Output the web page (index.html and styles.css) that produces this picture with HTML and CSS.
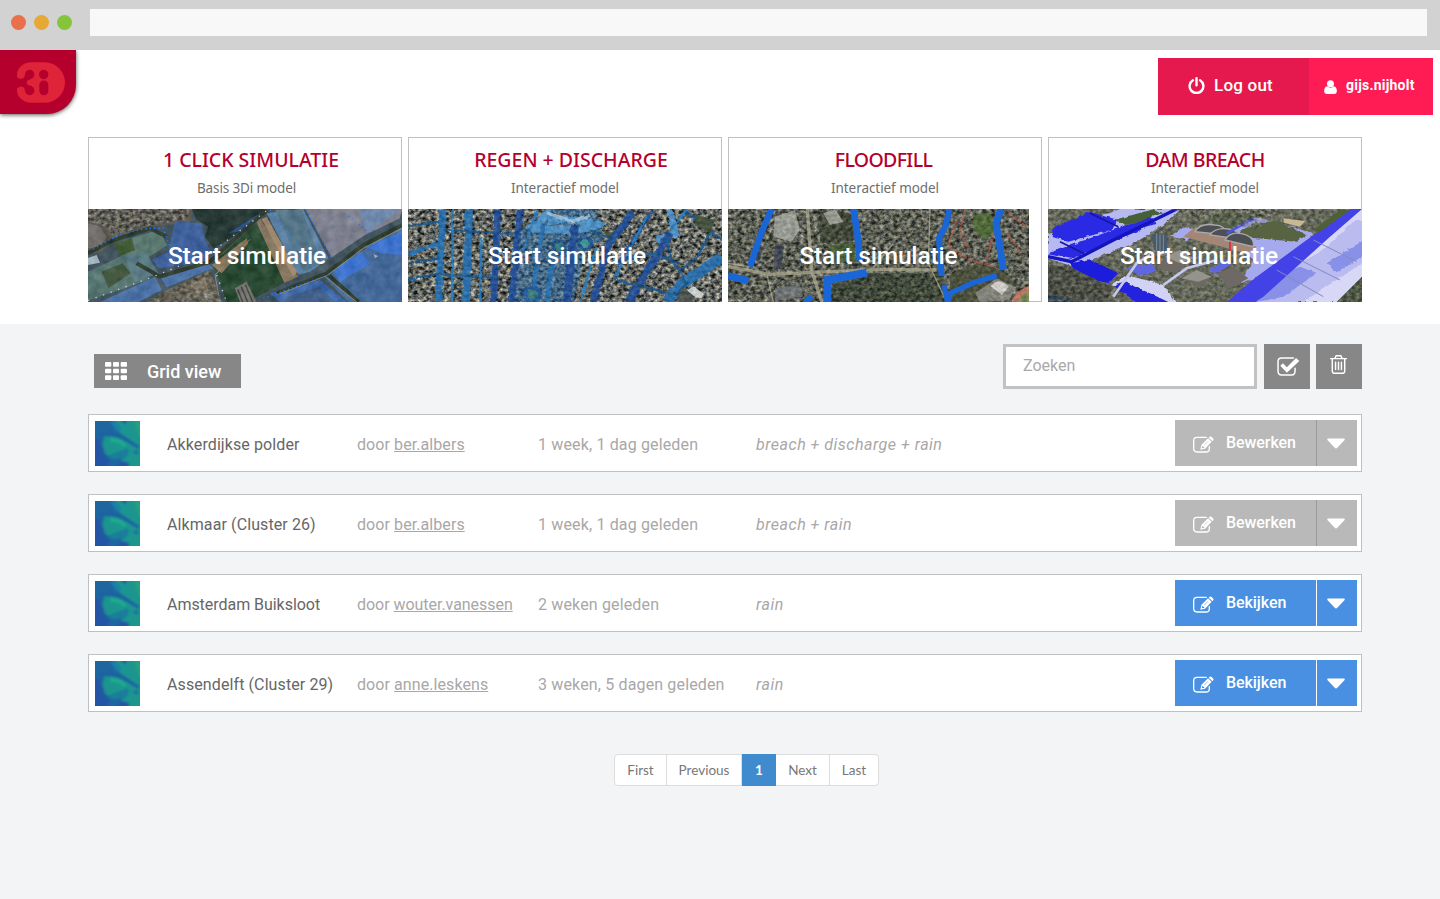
FILE: index.html
```html
<!DOCTYPE html>
<html lang="nl">
<head>
<meta charset="utf-8">
<title>3Di</title>
<link rel="stylesheet" href="styles.css">
</head>
<body>
<svg class="defs" aria-hidden="true">
  <defs>
    <filter id="ground" x="0" y="0" width="100%" height="100%" color-interpolation-filters="sRGB">
      <feTurbulence type="fractalNoise" baseFrequency="0.035" numOctaves="4" seed="4" result="n"/>
      <feColorMatrix in="n" values="1 .6 0 0 -.45  1 .6 0 0 -.42  1 .6 0 0 -.44  0 0 0 0 .75" result="c"/>
      <feComposite in="c" in2="SourceGraphic" operator="in"/>
    </filter>
    <filter id="houses" x="0" y="0" width="100%" height="100%" color-interpolation-filters="sRGB">
      <feTurbulence type="fractalNoise" baseFrequency="0.075 0.095" numOctaves="3" seed="9" result="n"/>
      <feColorMatrix in="n" values="1.5 .3 0 0 -.5  1.4 .3 .1 0 -.5  1.3 .2 .3 0 -.53  0 0 0 0 .8" result="c"/>
      <feComposite in="c" in2="SourceGraphic" operator="in"/>
    </filter>
    <filter id="rough" x="-5%" y="-5%" width="110%" height="110%">
      <feTurbulence type="fractalNoise" baseFrequency="0.06" numOctaves="2" seed="3" result="n"/>
      <feDisplacementMap in="SourceGraphic" in2="n" scale="12" xChannelSelector="R" yChannelSelector="G"/>
    </filter>
    <filter id="soft"><feGaussianBlur stdDeviation="2.6"/></filter>
    <symbol id="thumb" viewBox="0 0 135 135">
      <rect width="135" height="135" fill="#1f66a0"/>
      <g filter="url(#soft)">
        <path d="M60-5H140V140H86L78 122L84 108L50 112L32 100L22 70L30 40L46 38L82 46L66 20Z" fill="#1a958f"/>
        <path d="M46 50Q70 48 96 70L88 78Q64 60 46 64Z" fill="#1fab8f"/>
        <path d="M56-5L78 20L72 34L62 28L48 6Z" fill="#1d7fa5"/>
        <path d="M76-5H98L90 10Z" fill="#2457a4"/>
        <path d="M0 34L34 34Q70 28 96 50L134 76L130 84L96 64Q62 42 22 46Z" fill="#1d62a0"/>
        <path d="M70 92L98 82L102 94L90 112L50 116L40 104Z" fill="#1a7b9c"/>
        <path d="M118 0H140V60L128 34Z" fill="#25a078"/>
        <path d="M-5 50L16 58L24 94L46 120L34 140H-5Z" fill="#2357a4"/>
        <path d="M76 118L104 126L98 140H70ZM112 92L130 90L126 100Z" fill="#2755a4"/>
      </g>
    </symbol>
    <symbol id="edit" viewBox="0 0 63 51">
      <path d="M40 4H12Q2 4 2 14V37Q2 48 12 48H39Q49 48 49 38V32" fill="none" stroke="#fff" stroke-width="4" stroke-linecap="round"/>
      <path d="M22 41L25 27L45 7L56 17L36 38Z" fill="#fff"/>
      <path d="M47 5L50 2Q53 0 56 3L61 8Q63 11 60 14L58 15Z" fill="#fff"/>
      <path d="M28 29L35 35L29 37L26 34Z" fill="currentColor"/><path d="M34 27L45 16" stroke="currentColor" stroke-width="1.8"/>
    </symbol>
    <symbol id="caret" viewBox="0 0 54 32"><path d="M3 1H51Q55 2 52 6L31 29Q27 33 23 29L2 6Q-1 2 3 1Z" fill="#fff"/></symbol>
  </defs>
</svg>

<div class="chrome">
  <div class="lights"><i class="red"></i><i class="amber"></i><i class="green"></i></div>
  <div class="address"></div>
</div>

<header class="top">
  <div class="logo">
    <svg viewBox="51 186 144 122" width="48" height="41">
      <path d="M93 186H134A61 61 0 0 1 134 308H93C70 308 51 290 51 272V224C51 203 70 186 93 186Z" fill="#df2339"/>
      <g fill="#b5002d">
        <circle cx="89" cy="223" r="14"/><circle cx="89" cy="271" r="14"/>
        <path d="M48 226Q54 237 64 236Q74 235 75 222L92 237Q80 239 80 247Q80 255 92 257L75 272Q74 260 64 259Q54 259 48 270Z"/>
        <circle cx="131" cy="223" r="14"/><rect x="118" y="241" width="27" height="44" rx="13"/>
      </g>
    </svg>
  </div>
  <nav class="account">
    <a class="logout">
      <svg viewBox="0 0 50 52" width="17" height="17" fill="none" stroke="#fff" stroke-width="7.5" stroke-linecap="round"><path d="M14 10A21 21 0 1 0 36 10M25 4V25"/></svg>
      <span>Log out</span>
    </a>
    <a class="user">
      <svg viewBox="0 0 38 42" width="13" height="14" fill="#fff"><circle cx="19" cy="11" r="10.5"/><path d="M9 19Q19 27 29 19Q38 21 38 33Q38 42 30 42H8Q0 42 0 33Q0 21 9 19Z"/></svg>
      <span>gijs.nijholt</span>
    </a>
  </nav>
</header>

<section class="cards">
  <article class="card">
    <h2 class="t1">1 CLICK SIMULATIE</h2>
    <p class="basis">Basis 3Di model</p>
    <div class="shot">
      <svg viewBox="24 237 942 279" preserveAspectRatio="none">
        <rect x="24" y="237" width="942" height="279" fill="#3f5360"/>
        <path d="M24 237H340L330 275L180 295L110 325L60 370L24 370Z" fill="#5d5852"/>
        <path d="M24 280L60 290L80 320L60 350L24 355Z" fill="#77726f"/>
        <path d="M335 237H560L455 325L400 355L375 320L385 290L350 270Z" fill="#20332f"/>
        <path d="M445 310L555 240L500 300Z" fill="#27548f"/>
        <path d="M285 275L365 280L375 330L390 360L375 395L300 405L240 415L215 390L265 365L275 320Z" fill="#3d63a8"/>
        <path d="M100 340L235 300L262 345L200 385L130 395Z" fill="#5b7d74"/>
        <path d="M100 340L155 325L165 360L120 378Z" fill="#3f5b32"/>
        <path d="M24 425L125 378L195 415L205 450L24 512Z" fill="#587a75"/>
        <path d="M65 425L128 400L152 430L85 475Z" fill="#41573c"/>
        <path d="M130 375L200 370L235 430L165 455Z" fill="#5a7f8b"/>
        <path d="M60 516L225 440L245 480L175 516ZM240 440L385 400L400 415L260 472Z" fill="#4b75b2"/>
        <path d="M250 485L390 420L425 516H200Z" fill="#6a6253"/>
        <path d="M395 395L520 290L540 265L655 440L610 460L490 335L415 425Z" fill="#8f7b62"/>
        <path d="M395 400L530 278L613 458L500 516H440L410 435Z" fill="#24472e"/>
        <path d="M395 405L500 325L505 340L425 430Z" fill="#927b5f"/>
        <path d="M545 268L560 260L652 425L640 440Z" fill="#ac9173"/>
        <path d="M560 250L670 237L745 385L690 425L655 435Z" fill="#5e87b0"/>
        <path d="M585 240L665 240L725 400L670 425Z" fill="#54798f"/>
        <path d="M675 237H966L960 265L855 315L755 382Z" fill="#858698"/>
        <path d="M835 237H965L860 308Z" fill="#7391bb"/>
        <path d="M735 430L966 290V516H805L745 455Z" fill="#416aa3"/>
        <path d="M760 415L845 365L870 400L780 455ZM855 350L966 305V375L905 370Z" fill="#3c78e2"/>
        <path d="M570 490L720 450L800 516H600Z" fill="#3c6bb7"/>
        <path d="M620 500L720 470L765 516H610Z" fill="#3d5f90"/>
        <g fill="none" stroke="#29382a" stroke-width="12"><path d="M24 370L100 330L210 295L260 320"/><path d="M170 400L240 440L390 395L560 240"/><path d="M590 490L740 430L850 345L966 285"/><path d="M740 430L835 516"/></g>
        <g fill="none" stroke="#948e78" stroke-width="3"><path d="M590 495L740 437L850 355L966 295M735 440L830 516M420 516L405 435L510 328"/></g>
        <g fill="none" stroke="#267cff" stroke-width="4" stroke-dasharray="4 9"><path d="M40 358Q140 290 250 295L280 380L385 395M570 240L710 425M680 240L755 385M550 505L760 430L966 310M795 250L870 310M725 480L780 516"/></g>
        <g fill="none" stroke="#d4e1ec" stroke-width="4" stroke-dasharray="4 20"><path d="M24 512L230 436L390 370L565 238M410 435L440 516"/></g>
        <path d="M465 475L500 455L530 516H480Z" fill="#77746f"/><path d="M473 478L488 516M484 470L503 516M496 464L518 516" stroke="#373c37" stroke-width="4"/>
        <path d="M333 463L375 440L390 505L350 490Z" fill="#92816c"/>
        <path d="M24 384L50 375L60 398L24 405ZM370 490L390 493L378 504ZM880 372L895 378L885 385Z" fill="#adc0ce"/>
        <rect x="24" y="237" width="942" height="279" filter="url(#ground)" opacity=".2"/>
        <path d="M70 237H330L320 270L180 290L100 320L80 290L24 275V237Z" filter="url(#houses)" opacity=".6"/>
        <path d="M250 485L390 420L425 516H200Z" filter="url(#houses)" opacity=".4"/>
      </svg>
      <span>Start simulatie</span>
    </div>
  </article>

  <article class="card">
    <h2 class="t2">REGEN + DISCHARGE</h2>
    <p>Interactief model</p>
    <div class="shot">
      <svg viewBox="24 237 942 279" preserveAspectRatio="none">
        <rect x="24" y="237" width="942" height="279" fill="#5d6870"/>
        <rect x="24" y="237" width="942" height="279" filter="url(#houses)"/>
        <path d="M360 300L440 237H590L610 330L560 350L520 516H330Z" fill="#1f6db5" opacity=".5"/>
        <g filter="url(#rough)" fill="none">
          <path d="M385 295Q440 275 445 237M445 275Q520 260 590 285Q540 310 395 295M810 240L825 310L770 330" stroke="#4b98d6" stroke-width="22"/>
          <path d="M440 250L520 275L570 255" stroke="#a4c9e2" stroke-width="12"/>
          <g stroke="#2371b8"><path d="M128 237L116 516" stroke-width="20"/><path d="M207 237L198 516" stroke-width="24"/><path d="M24 372L120 340" stroke-width="13"/><path d="M966 380L850 460L800 516" stroke-width="32"/><path d="M430 280L395 516M470 320L440 516" stroke-width="14"/></g>
          <g stroke="#1b4e9e"><path d="M293 237L282 516" stroke-width="20"/><path d="M360 237L335 516" stroke-width="20"/><path d="M525 285L500 516" stroke-width="24"/><path d="M700 245L625 345L580 516" stroke-width="21"/><path d="M810 310L685 516" stroke-width="23"/><path d="M760 240L655 400" stroke-width="12"/></g>
          <g stroke="#17558f" stroke-width="7"><path d="M24 290L120 275M130 300L360 312M120 435L290 440M570 300L640 330M650 450L830 495L860 460L815 390L800 320M850 237L966 330M930 310L890 385L840 420M620 400L760 370L840 400M24 450L120 430M24 400L115 385M500 250L520 237L540 250"/></g>
          <g stroke="#237fcb" stroke-width="7"><path d="M245 320L240 516M410 237L370 360M158 237L156 516M590 350L540 516M740 260L640 450M860 240L810 300"/></g>
          <circle cx="555" cy="340" r="17" stroke="#14549c" stroke-width="10" fill="#3b9b9d"/><circle cx="478" cy="352" r="20" stroke="#124b86" stroke-width="9" fill="#307c86"/><circle cx="397" cy="493" r="22" stroke="#1a5ca8" stroke-width="12" fill="#347d83"/>
        </g>
        <path d="M830 506L850 470L875 490L880 516H835Z" fill="#4a514d"/><path d="M862 482L880 468L912 492L905 505L885 500Z" fill="#d8dde0"/>
        <path d="M890 255L945 270L930 310L885 285ZM610 300L640 310L625 325Z" fill="#41513b"/>
        <rect x="24" y="237" width="942" height="279" filter="url(#houses)" opacity=".2"/>
      </svg>
      <span>Start simulatie</span>
    </div>
  </article>

  <article class="card">
    <h2 class="t3">FLOODFILL</h2>
    <p>Interactief model</p>
    <div class="shot narrow">
      <svg viewBox="24 237 903 279" preserveAspectRatio="none">
        <rect x="24" y="237" width="903" height="279" fill="#4e5547"/>
        <rect x="24" y="237" width="903" height="279" filter="url(#houses)" opacity=".65"/>
        <path d="M440 430L670 430L680 516H330L335 460Z" fill="#25321f" opacity=".6"/>
        <path d="M300 240L390 250L420 330L300 340Z" fill="#343d2c" opacity=".8"/>
        <path d="M330 345L400 340L410 395L320 400Z" fill="#435b2e"/>
        <path d="M760 255L810 245L830 300L795 330L760 300Z" fill="#4d6b32"/>
        <path d="M165 260L225 240L240 300L215 335L160 320ZM310 250L345 237L370 275L330 285Z" fill="#a4a9a0"/>
        <path d="M165 340L192 350L185 415L160 420ZM110 345L130 355L115 395L95 385Z" fill="#3b4350"/>
        <path d="M165 475L240 465L250 500L165 510Z" fill="#70777a"/>
        <g fill="none" stroke="#a5a38a"><path d="M262 237L275 420L305 516M24 410L150 433L480 418L650 420" stroke-width="10"/><path d="M140 430L160 516M24 400L90 410M630 237L625 400L680 516M520 340L450 425" stroke-width="4"/></g>
        <g fill="none" stroke="#a35b4b" stroke-width="7" stroke-dasharray="13 4"><path d="M710 270L685 350L750 390L820 410M735 240L720 300L745 360M820 310L800 390M865 250L920 290M860 310L905 370"/></g>
        <path d="M690 437Q760 380 850 425L885 465L840 516H690Z" fill="#474d37"/>
        <path d="M765 490L830 445L885 470L870 510L780 516Z" fill="#8b8b84"/><path d="M812 468Q838 440 866 470L846 495Z" fill="#e7e5df"/>
        <path d="M875 516Q880 485 927 467V516Z" fill="#c67a62"/><path d="M897 516Q905 492 927 487V516Z" fill="#778e50"/>
        <rect x="24" y="237" width="903" height="279" filter="url(#houses)" opacity=".25"/>
        <g fill="none" stroke="#1a66d6"><path d="M155 237L125 305L90 410" stroke-width="19"/><path d="M24 437L85 453" stroke-width="21"/><path d="M400 237L412 310L420 395" stroke-width="20"/><path d="M322 516V450L440 428" stroke-width="24"/><path d="M688 237L678 285L657 325L665 438" stroke-width="18"/><path d="M843 237L828 280L838 340L850 420" stroke-width="21"/><path d="M672 465L683 516L690 490L760 458L830 437" stroke-width="16"/><path d="M255 516L275 500" stroke-width="18"/></g>
      </svg>
      <span>Start simulatie</span>
    </div>
  </article>

  <article class="card">
    <h2 class="t4">DAM BREACH</h2>
    <p>Interactief model</p>
    <div class="shot left">
      <svg viewBox="24 237 942 279" preserveAspectRatio="none">
        <rect x="24" y="237" width="942" height="279" fill="#656a59"/>
        <rect x="24" y="237" width="942" height="279" filter="url(#houses)" opacity=".4"/>
        <g filter="url(#rough)">
          <path d="M90 290L240 237H420L370 285L270 345L100 410L24 385V310Z" fill="#b7baf0"/>
          <path d="M40 295L150 245L235 270L215 300L85 335L35 320ZM24 370L120 335L330 260L350 280L100 385Z" fill="#2b2be4"/>
          <path d="M225 270L340 237L370 250L260 285Z" fill="#476038"/>
          <path d="M90 400L150 388L235 430L205 460L110 435Z" fill="#1c1ddd"/>
          <path d="M215 465L260 435L370 465L410 516H300Z" fill="#d2d2f4"/>
          <path d="M222 470L250 455L330 490L385 516H290Z" fill="#2021df"/>
          <path d="M250 415L335 400L350 425L300 435ZM505 420L560 390L580 400L530 430Z" fill="#5e66e0"/>
          <path d="M390 320L430 290L470 300L440 330ZM560 300L640 260L700 275L820 310L800 340L760 380L640 450L600 460L640 390L620 370Z" fill="#a5a9ed"/>
          <path d="M600 305L640 280L710 272L800 315L770 335L600 320Z" fill="#586442"/>
          <path d="M500 270L560 240L650 260L570 302Z" fill="#536146"/>
          <path d="M930 250L980 230V450L900 516H650L700 425Z" fill="#d8d8f6"/>
          <path d="M710 440L850 360L945 270L980 270V390L790 516H660Z" fill="#babcf0"/>
          <path d="M700 440L780 410L830 430L730 500L650 516ZM860 400L980 325V370L890 430Z" fill="#8990e8"/>
        </g>
        <path d="M560 516L650 440L800 330L935 237H966L865 325L670 500L645 516Z" fill="#4342e6"/>
        <path d="M24 380L95 395L220 330L410 237" fill="none" stroke="#1515ba" stroke-width="10"/>
        <path d="M150 250L235 290M60 335L130 370" stroke="#1616a2" stroke-width="5"/>
        <path d="M820 300L900 240H930L840 305Z" fill="#4e6037"/>
        <path d="M24 405L90 410L220 475L195 516H24Z" fill="#43483e"/>
        <path d="M24 495L70 500L100 516H24Z" fill="#1e3549"/>
        <path d="M890 516L966 440V516Z" fill="#455239"/>
        <path d="M430 320L465 292L650 350L620 370Z" fill="#a38676"/>
        <g fill="#4c5055" stroke="#aaaaab" stroke-width="4"><path d="M465 305Q480 278 525 285Q555 285 560 315Z"/><path d="M510 315Q525 292 565 297Q600 300 605 328Z"/><path d="M555 330Q570 303 605 311Q645 320 640 350Z"/></g>
        <path d="M335 315L350 307L382 318L380 365L342 360Z" fill="#495b6b"/><path d="M350 310V362M360 313V363M370 315V363" stroke="#9aa7af" stroke-width="2"/>
        <path d="M375 380L420 360L460 385L410 430L350 415ZM425 445L470 420L515 440L480 473ZM530 430L580 410L625 445L570 475Z" fill="#6e6964"/><path d="M375 380L420 360L460 385L420 400ZM425 445L470 420L515 440L475 455Z" fill="#94938c"/>
        <path d="M570 335V365" stroke="#d33746" stroke-width="6"/>
        <path d="M640 265L560 310" stroke="#4e55df" stroke-width="8"/>
        <path d="M710 420L850 500M760 380L900 450M820 330L950 395" stroke="#8389c5" stroke-width="3"/>
        <path d="M730 265L795 273L780 290L732 278Z" fill="#c8b894"/>
        <path d="M370 465L440 415L530 390M220 500L290 400L330 375" fill="none" stroke="#c5c8ed" stroke-width="8"/>
        <path d="M24 405L90 410L220 475L195 516H24ZM390 237H720L650 300L500 270ZM890 516L966 440V516Z" filter="url(#houses)" opacity=".4"/>
      </svg>
      <span>Start simulatie</span>
    </div>
  </article>
</section>

<main class="models">
  <div class="toolbar">
    <a class="gridview">
      <svg viewBox="0 0 66 54" width="22" height="18" fill="#fff"><rect width="19" height="14" rx="3"/><rect x="24" width="18" height="14" rx="3"/><rect x="47" width="19" height="14" rx="3"/><rect y="20" width="19" height="14" rx="3"/><rect x="24" y="20" width="18" height="14" rx="3"/><rect x="47" y="20" width="19" height="14" rx="3"/><rect y="40" width="19" height="14" rx="3"/><rect x="24" y="40" width="18" height="14" rx="3"/><rect x="47" y="40" width="19" height="14" rx="3"/></svg>
      <span>Grid view</span>
    </a>
    <div class="search"><span>Zoeken</span></div>
    <a class="tool"><svg viewBox="0 0 68 58" width="23" height="19"><path d="M49 3H13Q2 3 2 14V43Q2 55 13 55H43Q54 55 54 43V34" fill="none" stroke="#fff" stroke-width="4.5" stroke-linecap="round"/><path d="M9 27L17 19L29 31L57 3L67 12L29 48Z" fill="#fff"/></svg></a>
    <a class="tool trash"><svg viewBox="0 0 52 58" width="17" height="19" fill="none" stroke="#fff" stroke-width="4.5" stroke-linecap="round"><path d="M2 11H50M15 10L19 2H33L37 10M7 12V50Q7 56 13 56H39Q45 56 45 50V12M17 22V44M26 22V44M35 22V44"/></svg></a>
  </div>

  <div class="list">
    <div class="row">
      <svg class="thumb"><use href="#thumb"/></svg>
      <span class="name">Akkerdijkse polder</span>
      <span class="owner">door <u>ber.albers</u></span>
      <span class="age">1 week, 1 dag geleden</span>
      <em>breach + discharge + rain</em>
      <div class="action"><a><svg class="edit"><use href="#edit"/></svg><span>Bewerken</span></a><a class="more"><svg><use href="#caret"/></svg></a></div>
    </div>
    <div class="row">
      <svg class="thumb"><use href="#thumb"/></svg>
      <span class="name">Alkmaar (Cluster 26)</span>
      <span class="owner">door <u>ber.albers</u></span>
      <span class="age">1 week, 1 dag geleden</span>
      <em>breach + rain</em>
      <div class="action"><a><svg class="edit"><use href="#edit"/></svg><span>Bewerken</span></a><a class="more"><svg><use href="#caret"/></svg></a></div>
    </div>
    <div class="row">
      <svg class="thumb"><use href="#thumb"/></svg>
      <span class="name tight">Amsterdam Buiksloot</span>
      <span class="owner tight">door <u>wouter.vanessen</u></span>
      <span class="age">2 weken geleden</span>
      <em>rain</em>
      <div class="action view"><a><svg class="edit"><use href="#edit"/></svg><span>Bekijken</span></a><a class="more"><svg><use href="#caret"/></svg></a></div>
    </div>
    <div class="row">
      <svg class="thumb"><use href="#thumb"/></svg>
      <span class="name">Assendelft (Cluster 29)</span>
      <span class="owner">door <u>anne.leskens</u></span>
      <span class="age">3 weken, 5 dagen geleden</span>
      <em>rain</em>
      <div class="action view"><a><svg class="edit"><use href="#edit"/></svg><span>Bekijken</span></a><a class="more"><svg><use href="#caret"/></svg></a></div>
    </div>
  </div>

  <div class="pages">
    <a class="p-first">First</a><a class="p-prev">Previous</a><a class="p-now">1</a><a class="p-next">Next</a><a class="p-last">Last</a>
  </div>
</main>
</body>
</html>
```

FILE: styles.css
```css
* { box-sizing: border-box; }
body { margin: 0; width: 1440px; height: 899px; overflow: hidden; background: #fff; font-family: Roboto, "Liberation Sans", sans-serif; display: flex; flex-direction: column; }
.defs { position: absolute; width: 0; height: 0; }
.chrome { flex: none; height: 50px; background: #d2d2d2; display: flex; padding: 9px 13px 0 11px; gap: 18px; }
.lights { display: flex; gap: 8px; padding-top: 6px; }
.lights i { width: 15px; height: 15px; border-radius: 50%; }
.red { background: #ea6f4b; }
.amber { background: #e6a935; }
.green { background: #86c53b; }
.address { flex: 1; height: 27px; background: #f8f8f8; }
.top { flex: none; height: 87px; display: flex; justify-content: space-between; padding-right: 7px; }
.logo { width: 76px; height: 64px; background: #b5002d; border-radius: 0 0 29px 0; box-shadow: 0 1px 4px rgba(0,0,0,.65); padding: 12px 0 0 17px; clip-path: inset(0 -8px -8px 0); }
.logo svg { display: block; }
.account { display: flex; height: 57px; margin-top: 8px; color: #fff; }
.account a { display: flex; align-items: center; white-space: nowrap; padding-bottom: 3px; }
.account svg { flex: none; }
.logout { width: 151px; background: #e6194e; padding-left: 30px; gap: 9px; font-size: 17px; font-weight: 500; letter-spacing: .22px; }
.user { width: 124px; background: #ff1c55; padding-left: 15px; gap: 9px; font-size: 14px; font-weight: 700; letter-spacing: .22px; }
.user svg { margin-top: 3px; }
.cards { flex: none; display: flex; gap: 6px; padding-left: 88px; height: 187px; }
.card { width: 314px; height: 165px; border: 1px solid #c0c0c0; text-align: center; }
.card h2 { margin: 0; padding-top: 8px; height: 38px; font: 500 19.5px/28px "Noto Sans", sans-serif; color: #b5002d; white-space: nowrap; }
.t1, .t2 { padding-left: 12px; }
.card .t3 { letter-spacing: -.65px; padding-right: 3px; }
.card .t4 { letter-spacing: -.55px; }
.card p { margin: 0; height: 33px; font: 13.5px/24px "Noto Sans", sans-serif; letter-spacing: -.06px; color: #6d6d6d; }
.card .basis { letter-spacing: -.13px; padding-left: 3px; }
.shot { width: 314px; height: 93px; margin-left: -1px; display: grid; overflow: hidden; }
.shot svg { grid-area: 1 / 1; width: 100%; height: 93px; display: block; }
.shot span { grid-area: 1 / 1; z-index: 1; line-height: 93px; font-size: 24.5px; font-weight: 500; letter-spacing: -.16px; color: #fff; padding-left: 4px; }
.narrow { width: 301px; }
.left span { padding: 0 12px 0 0; }
.narrow span { padding: 0; }
.models { flex: 1; background: #f3f4f6; padding: 20px 78px 0 88px; }
.toolbar { height: 45px; display: flex; }
.gridview { width: 147px; height: 34px; margin: 10px auto 0 6px; background: #878787; color: #fff; display: flex; align-items: center; gap: 20px; padding-left: 11px; font-size: 18px; font-weight: 500; white-space: nowrap; }
.search { width: 254px; height: 45px; border: 3px solid #c2c2c2; background: #fff; color: #a9a9a9; padding-left: 17px; line-height: 37px; font-size: 16px; }
.tool { width: 46px; height: 45px; background: #878787; margin-left: 7px; padding: 13px 0 0 13px; }
.trash { margin-left: 6px; padding: 11px 0 0 14px; }
.list { margin-top: 25px; display: flex; flex-direction: column; gap: 22px; }
.row { height: 58px; background: #fff; border: 1px solid #c0c0c0; display: grid; grid-template-columns: 72px 190px 181px 218px 1fr 182px; padding: 5px 4px 5px 6px; line-height: 50px; font-size: 16px; color: #a9a7a7; white-space: nowrap; }
.thumb { width: 45px; height: 45px; margin-top: 1px; }
.name { color: #666; letter-spacing: .1px; }
.owner { letter-spacing: .08px; }
.row .tight { letter-spacing: -.04px; }
.age { letter-spacing: .15px; }
.row em { letter-spacing: .5px; }
.action { height: 46px; display: grid; grid-template-columns: 141px 40px; gap: 1px; background: #999; color: #b9b9b9; line-height: 20px; }
.action a { background: #b9b9b9; display: flex; align-items: center; padding-left: 18px; gap: 12px; }
.action span { color: #fff; font-weight: 500; font-size: 16px; letter-spacing: -.07px; }
.edit { width: 21px; height: 17px; margin-top: 2px; flex: none; }
.action .more { padding-left: 10px; }
.more svg { width: 18px; height: 11px; }
.action.view { background: #fff; color: #4a90e2; }
.view a { background: #4a90e2; }
.pages { margin: 42px 0 0 526px; width: 265px; height: 32px; display: flex; background: #fff; border: 1px solid #ddd; border-radius: 4px; font: 13.5px/30px Lato, sans-serif; color: #777; text-align: center; }
.pages a { border-right: 1px solid #ddd; }
.p-first { width: 52px; }
.p-prev { width: 75px; }
.pages .p-now { width: 34px; height: 32px; margin-top: -1px; line-height: 32px; background: #3f8bcd; border: 0; color: #fff; font-weight: 700; }
.p-next { width: 54px; }
.pages .p-last { width: 48px; border: 0; }
```
